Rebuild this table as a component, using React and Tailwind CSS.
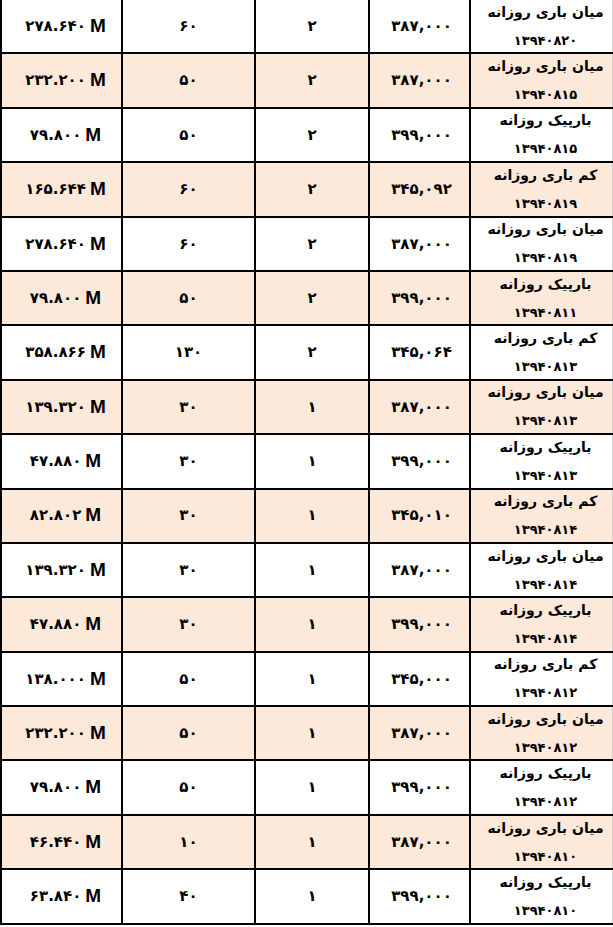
// جدول قیمت برق روزانه
const rows = [
  { total: '۲۷۸.۶۴۰', qty: '۶۰', n: '۲', price: '۳۸۷,۰۰۰', label: 'میان باری روزانه', code: '۱۳۹۴۰۸۲۰' },
  { total: '۲۳۲.۲۰۰', qty: '۵۰', n: '۲', price: '۳۸۷,۰۰۰', label: 'میان باری روزانه', code: '۱۳۹۴۰۸۱۵' },
  { total: '۷۹.۸۰۰', qty: '۵۰', n: '۲', price: '۳۹۹,۰۰۰', label: 'بارپیک روزانه', code: '۱۳۹۴۰۸۱۵' },
  { total: '۱۶۵.۶۴۴', qty: '۶۰', n: '۲', price: '۳۴۵,۰۹۲', label: 'کم باری روزانه', code: '۱۳۹۴۰۸۱۹' },
  { total: '۲۷۸.۶۴۰', qty: '۶۰', n: '۲', price: '۳۸۷,۰۰۰', label: 'میان باری روزانه', code: '۱۳۹۴۰۸۱۹' },
  { total: '۷۹.۸۰۰', qty: '۵۰', n: '۲', price: '۳۹۹,۰۰۰', label: 'بارپیک روزانه', code: '۱۳۹۴۰۸۱۱' },
  { total: '۳۵۸.۸۶۶', qty: '۱۳۰', n: '۲', price: '۳۴۵,۰۶۴', label: 'کم باری روزانه', code: '۱۳۹۴۰۸۱۳' },
  { total: '۱۳۹.۳۲۰', qty: '۳۰', n: '۱', price: '۳۸۷,۰۰۰', label: 'میان باری روزانه', code: '۱۳۹۴۰۸۱۳' },
  { total: '۴۷.۸۸۰', qty: '۳۰', n: '۱', price: '۳۹۹,۰۰۰', label: 'بارپیک روزانه', code: '۱۳۹۴۰۸۱۳' },
  { total: '۸۲.۸۰۲', qty: '۳۰', n: '۱', price: '۳۴۵,۰۱۰', label: 'کم باری روزانه', code: '۱۳۹۴۰۸۱۴' },
  { total: '۱۳۹.۳۲۰', qty: '۳۰', n: '۱', price: '۳۸۷,۰۰۰', label: 'میان باری روزانه', code: '۱۳۹۴۰۸۱۴' },
  { total: '۴۷.۸۸۰', qty: '۳۰', n: '۱', price: '۳۹۹,۰۰۰', label: 'بارپیک روزانه', code: '۱۳۹۴۰۸۱۴' },
  { total: '۱۳۸.۰۰۰', qty: '۵۰', n: '۱', price: '۳۴۵,۰۰۰', label: 'کم باری روزانه', code: '۱۳۹۴۰۸۱۲' },
  { total: '۲۳۲.۲۰۰', qty: '۵۰', n: '۱', price: '۳۸۷,۰۰۰', label: 'میان باری روزانه', code: '۱۳۹۴۰۸۱۲' },
  { total: '۷۹.۸۰۰', qty: '۵۰', n: '۱', price: '۳۹۹,۰۰۰', label: 'بارپیک روزانه', code: '۱۳۹۴۰۸۱۲' },
  { total: '۴۶.۴۴۰', qty: '۱۰', n: '۱', price: '۳۸۷,۰۰۰', label: 'میان باری روزانه', code: '۱۳۹۴۰۸۱۰' },
  { total: '۶۳.۸۴۰', qty: '۴۰', n: '۱', price: '۳۹۹,۰۰۰', label: 'بارپیک روزانه', code: '۱۳۹۴۰۸۱۰' },
];

export default function App() {
  return (
    <div className="w-[613px] h-[927px] bg-white overflow-hidden font-['DejaVu_Sans',sans-serif] text-black">
      {rows.map((r, i) => (
        <div
          key={i}
          className={`grid grid-cols-[123px_133px_114px_101px_1fr] grid-rows-[100%] h-[54.4px] border-b-2 border-black ${
            i % 2 === 1 ? 'bg-[#fde9d9]' : 'bg-white'
          }`}
        >
          {/* مبلغ کل */}
          <div className="flex items-center justify-center pl-2 border-l-2 border-r-2 border-black font-bold text-[15px]" dir="ltr">
            <span>{r.total}</span>
            <span className="ml-1 font-['Liberation_Sans',sans-serif] text-[19px]">M</span>
          </div>
          {/* مقدار */}
          <div className="flex items-center justify-center border-r-2 border-black font-bold text-[15px]">
            {r.qty}
          </div>
          <div className="flex items-center justify-center border-r-2 border-black font-bold text-[15px]">
            {r.n}
          </div>
          {/* قیمت */}
          <div className="flex items-center justify-center pl-1 border-r-2 border-black font-bold text-[15px]" dir="ltr">
            {r.price}
          </div>
          {/* نوع بار و کد */}
          <div className="flex flex-col items-center justify-center gap-[7px] pl-2 border-r border-[#d0d0d0] font-bold leading-[22px]" dir="rtl">
            <span className="text-[14px]">{r.label}</span>
            <span className="text-[13px]">{r.code}</span>
          </div>
        </div>
      ))}
    </div>
  );
}
